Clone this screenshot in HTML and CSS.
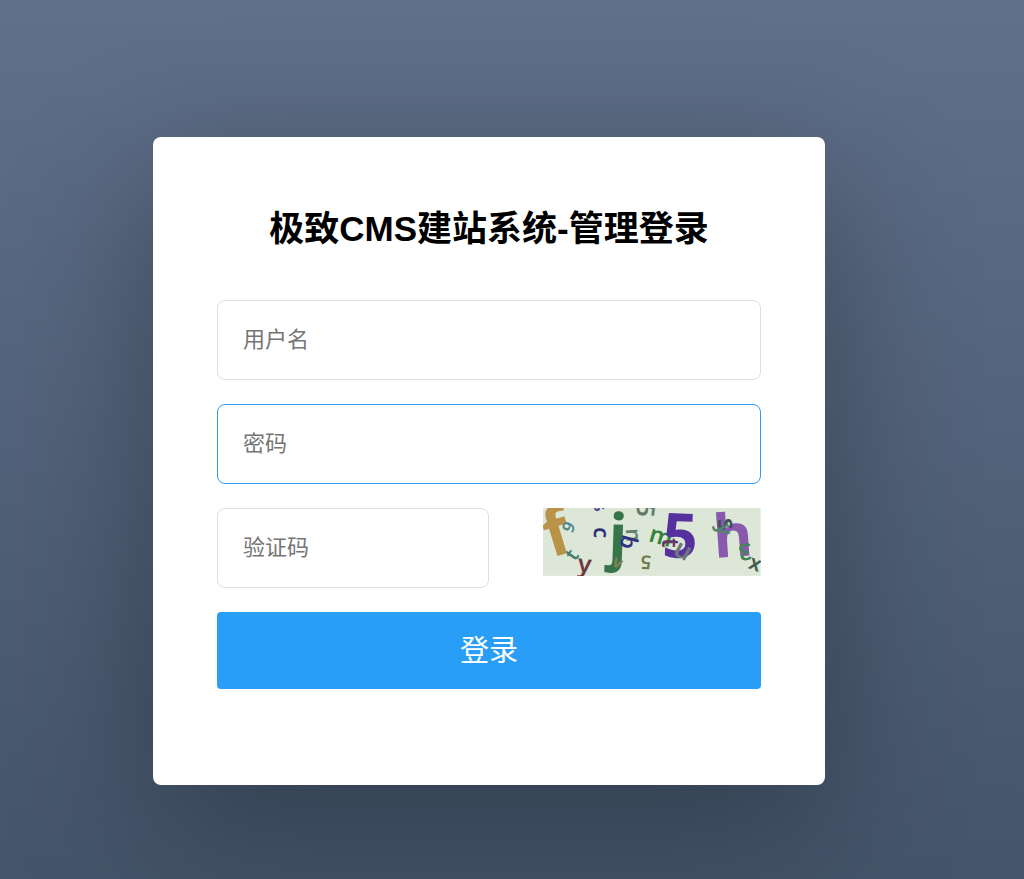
FILE: index.html
```html
<!DOCTYPE html>
<html lang="zh-CN">
<head>
<meta charset="utf-8">
<meta name="viewport" content="width=device-width, initial-scale=1">
<title>极致CMS建站系统-管理登录</title>
<link rel="stylesheet" href="styles.css">
</head>
<body class="page">
<main class="card">
  <h1 class="title">极致CMS建站系统-管理登录</h1>
  <form class="form">
    <input class="field" type="text" name="username" placeholder="用户名" aria-label="用户名">
    <input class="field field-active" type="password" name="password" placeholder="密码" aria-label="密码">
    <div class="row">
      <input class="field field-code" type="text" name="code" placeholder="验证码" aria-label="验证码">
      <svg class="captcha" viewBox="0 0 218 68" role="img" aria-label="验证码图片">
        <rect width="218" height="68" fill="#dce7d8"/>
        <text transform="translate(8 50) rotate(-17)" font-size="66" fill="#b99448">f</text>
        <g class="noise">
          <text transform="translate(29 26) rotate(-65)" font-size="17" fill="#4f8588">9</text>
          <text transform="translate(32 54) rotate(-55)" font-size="20" fill="#437c70">t</text>
          <text transform="translate(34 64) rotate(6)" font-size="25" fill="#70383f">y</text>
          <text transform="translate(51 19) rotate(91)" font-size="22" fill="#303276">c</text>
          <text transform="translate(50 -4) rotate(75)" font-size="18" fill="#5b4693">s</text>
          <text transform="translate(95 -6) rotate(97)" font-size="25" fill="#637b67">5</text>
        </g>
        <text transform="translate(65 50) rotate(2)" font-size="62" fill="#367549">j</text>
        <g class="noise">
          <text transform="translate(83 21) rotate(86)" font-size="21" fill="#628171">n</text>
          <text transform="translate(88 42) rotate(-75)" font-size="22" fill="#303280">q</text>
          <text transform="translate(68 57) rotate(28)" font-size="17" fill="#8c8058">v</text>
          <text transform="translate(109 48) rotate(184)" font-size="19" fill="#717a4d">5</text>
          <text transform="translate(105 33) rotate(16)" font-size="24" fill="#35823d">m</text>
        </g>
        <text transform="translate(119 49) rotate(2)" font-size="62" fill="#5730a0">5</text>
        <text transform="translate(172 50) rotate(-4)" font-size="60" fill="#8959ae">h</text>
        <g class="noise">
          <text transform="translate(119 30) rotate(90)" font-size="24" fill="#623961">t</text>
          <text transform="translate(129 46) rotate(28)" font-size="26" fill="#707777">u</text>
          <text transform="translate(175 11) rotate(83)" font-size="25" fill="#3e5052">s</text>
          <text transform="translate(174 17) rotate(80)" font-size="21" fill="#508669">y</text>
          <text transform="translate(208 35) rotate(172)" font-size="23" fill="#448654">3</text>
          <text transform="translate(205 60) rotate(20)" font-size="21" fill="#435b4b">x</text>
        </g>
      </svg>
    </div>
    <button class="submit" type="button">登录</button>
  </form>
</main>
</body>
</html>
```
FILE: styles.css
```css
* {
  box-sizing: border-box;
}

.page {
  min-height: 100vh;
  margin: 0;
  padding: 137px 46px 94px 0;
  background: linear-gradient(#60708a, #44546a);
  font-family: "Liberation Sans", "Noto Sans CJK SC", sans-serif;
}

.card {
  max-width: 672px;
  margin: 0 auto;
  padding: 65px 64px 96px;
  border-radius: 8px;
  background: #fff;
  box-shadow: 0 40px 150px rgba(0, 0, 0, 0.3);
}

.title {
  margin: 0 0 44px;
  color: #000;
  font-size: 35px;
  font-weight: 700;
  line-height: 54px;
  text-align: center;
}

.form {
  display: flex;
  flex-direction: column;
  gap: 24px;
}

.field {
  width: 100%;
  height: 80px;
  padding: 0 25px;
  border: 1px solid #dcdee0;
  border-radius: 8px;
  outline: 0;
  background: #fff;
  color: #333;
  font-family: inherit;
  font-size: 22px;
}

.field::placeholder {
  color: #757575;
}

.field-active {
  border-color: #289ef7;
}

.row {
  display: flex;
  justify-content: space-between;
  align-items: flex-start;
}

.field-code {
  width: 50%;
}

.captcha {
  width: 40%;
  font-family: "Noto Sans", sans-serif;
  font-weight: 700;
}

.noise {
  font-weight: 600;
}

.submit {
  height: 77px;
  padding: 0 0 5px;
  border: 0;
  border-radius: 4px;
  background: #289ef7;
  color: #fff;
  font-family: inherit;
  font-size: 29px;
  cursor: pointer;
}
```
